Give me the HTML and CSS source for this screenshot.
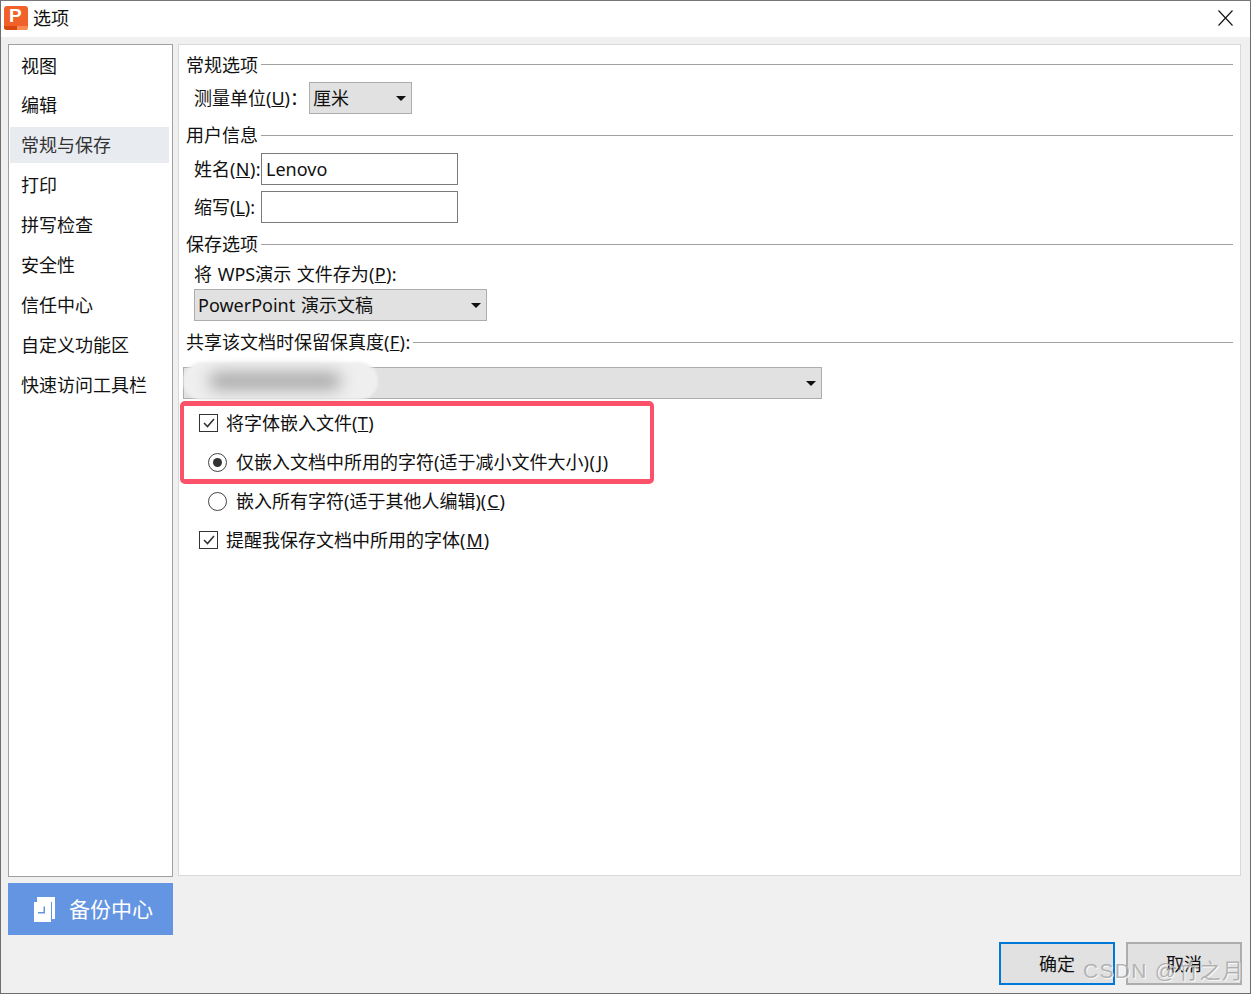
FILE: index.html
```html
<!DOCTYPE html>
<html lang="zh-CN">
<head>
<meta charset="utf-8">
<title>选项</title>
<link rel="stylesheet" href="styles.css">
</head>
<body>
<div class="window">
  <header class="titlebar">
    <svg class="logo" width="24" height="24" viewBox="0 0 24 24">
      <rect width="24" height="24" rx="3" fill="#f0622a"/>
      <path d="M0 20h13v4H3a3 3 0 0 1-3-3z" fill="#d9480f"/>
      <path d="M13 20h11v1a3 3 0 0 1-3 3h-8z" fill="#f98a50"/>
      <text x="5" y="16" class="logo-p">P</text>
    </svg>
    <span class="title">选项</span>
    <svg class="close" width="15" height="16" viewBox="0 0 15 16"><path d="M.5.5l14 15M14.500.5l-14 15" stroke="#111" stroke-width="1.100" fill="none"/></svg>
  </header>
  <div class="content">
    <div class="side-col">
      <nav class="sidebar">
        <div class="nav-item">视图</div>
        <div class="nav-item">编辑</div>
        <div class="nav-item active">常规与保存</div>
        <div class="nav-item">打印</div>
        <div class="nav-item">拼写检查</div>
        <div class="nav-item">安全性</div>
        <div class="nav-item">信任中心</div>
        <div class="nav-item">自定义功能区</div>
        <div class="nav-item">快速访问工具栏</div>
      </nav>
      <div class="backup">
        <svg width="22" height="25" viewBox="0 0 22 25">
          <path d="M3 0h18v22h-3V5H3z" fill="#fff"/>
          <rect x="0" y="5" width="17" height="20" fill="#fff"/>
          <path d="M4 15h5.500V9.500H11V16.500H4z" fill="#6495e2"/>
        </svg>
        <span>备份中心</span>
      </div>
    </div>
    <main class="panel">
      <div class="group group-first"><span>常规选项</span><i></i></div>
      <div class="row row-unit"><span class="lbl unit-lbl">测量单位(<u>U</u>)：</span>
        <div class="select sel-unit"><span>厘米</span><b></b></div></div>
      <div class="group gap10"><span>用户信息</span><i></i></div>
      <div class="row row-name"><span class="lbl name-lbl">姓名<span class="key-s">(<u>N</u>)</span>:</span><div class="input">Lenovo</div></div>
      <div class="row row-abbr"><span class="lbl name-lbl">缩写(<u>L</u>):</span><div class="input"></div></div>
      <div class="group gap10"><span>保存选项</span><i></i></div>
      <div class="row row-save"><span class="lbl wide-words">将 WPS演示 文件存为<span class="key-s">(<u>P</u>)</span>:</span></div>
      <div class="row row-format"><div class="select sel-format"><span class="wide-words">PowerPoint 演示文稿</span><b></b></div></div>
      <div class="group gap10"><span>共享该文档时保留保真度<span class="key-s">(<u>F</u>)</span>:</span><i></i></div>
      <div class="row row-share"><div class="select sel-share"><span></span><b></b></div><div class="blur"></div></div>
      <label class="opt opt-first"><span class="check"><svg width="12" height="10" viewBox="0 0 12 10"><path d="M1 5l3.500 3.500L11 1" stroke="#333" stroke-width="1.600" fill="none"/></svg></span>将字体嵌入文件<span class="key-s">(<u>T</u>)</span></label>
      <label class="opt opt-radio"><span class="radio on"></span>仅嵌入文档中所用的字符(适于减小文件大小<span class="key-m">)(<u>J</u>)</span></label>
      <label class="opt opt-radio"><span class="radio"></span>嵌入所有字符(适于其他人编辑)<span class="key-l">(<u>C</u>)</span></label>
      <label class="opt"><span class="check"><svg width="12" height="10" viewBox="0 0 12 10"><path d="M1 5l3.500 3.500L11 1" stroke="#333" stroke-width="1.600" fill="none"/></svg></span>提醒我保存文档中所用的字体<span class="key-l">(<u>M</u>)</span></label>
      <div class="highlight"></div>
    </main>
  </div>
  <footer class="footer">
    <button class="btn primary">确定</button>
    <button class="btn">取消</button>
  </footer>
  <div class="watermark">CSDN @竹之月</div>
</div>
</body>
</html>
```
FILE: styles.css
```css
* { box-sizing: border-box; }
html, body { margin: 0; padding: 0; }
body {
  width: 1251px; height: 994px; overflow: hidden;
  font-family: "Noto Sans", "Noto Sans CJK SC", sans-serif;
  font-size: 18px; line-height: 22px; color: #111;
}
.window {
  position: relative; width: 1251px; height: 994px;
  background: #f0f0f0; border: 1px solid #6e6e6e; border-top-color: #777;
  display: flex; flex-direction: column;
}
.titlebar {
  height: 36px; background: #fff; display: flex; align-items: center;
  padding: 0 17px 2px 3px; flex: none;
}
.logo { flex: none; }
.logo-p { font: bold 19px "Liberation Sans", sans-serif; fill: #fff; }
.title { margin-left: 5px; }
.close { margin-left: auto; }
.content { display: flex; flex: none; height: 898px; padding: 7px 9px 0 7px; gap: 5px; }
.side-col { width: 165px; flex: none; display: flex; flex-direction: column; gap: 6px; }
.sidebar {
  height: 833px; background: #fff; border: 1px solid #a0a0a0;
  padding: 2px 3px 0 1px; display: flex; flex-direction: column; gap: 4px;
}
.nav-item { height: 36px; line-height: 37px; padding-left: 11px; white-space: nowrap; }
.nav-item:first-child { line-height: 39px; }
.nav-item.active { background: #e8ebf0; color: #333; }
.backup {
  height: 52px; background: #6495e2; color: #fff; display: flex; align-items: center;
  padding-left: 26px; gap: 13px; font-size: 21px;
}
.panel {
  position: relative; flex: 1; height: 832px; background: #fff; border: 1px solid #d9d9d9;
  padding: 9px 7px 0 7px; display: flex; flex-direction: column;
}
.group { display: flex; align-items: center; height: 22px; gap: 3px; flex: none; white-space: nowrap; }
.group i { flex: 1; height: 1px; background: #a0a0a0; }
.group-first i { margin-top: -1px; }
.gap10 { margin-top: 10px; }
.row { display: flex; align-items: center; flex: none; padding-left: 8px; white-space: nowrap; }
.row-unit { margin-top: 6px; height: 32px; }
.row-name { margin-top: 7px; height: 32px; }
.row-abbr { margin-top: 6px; height: 32px; }
.row-save { margin-top: 8px; height: 22px; }
.row-format { margin-top: 4px; height: 32px; }
.row-share { margin-top: 14px; height: 32px; padding-left: 0; position: relative; }
.unit-lbl { width: 115px; }
.name-lbl { width: 67px; }
.key-s { letter-spacing: .4px; }
.key-m { letter-spacing: .7px; }
.key-l { letter-spacing: 1px; }
.wide-words { word-spacing: 1px; }
.select {
  height: 32px; background: #e1e1e1; border: 1px solid #adadad; display: flex; align-items: center;
  padding: 0 5px 0 3px; justify-content: space-between;
}
.select b { width: 0; height: 0; border: 5px solid transparent; border-top: 5px solid #111; border-bottom: 0; }
.sel-unit { width: 103px; }
.sel-format { width: 293px; }
.sel-share { width: 639px; margin-left: -3px; }
.input { width: 197px; height: 32px; border: 1px solid #7a7a7a; background: #fff; padding-left: 4px; line-height: 30px; }
.blur {
  position: absolute; left: -3px; top: -5px; width: 195px; height: 38px; border-radius: 19px;
  background: #efefef; filter: blur(1.500px);
}
.blur::after {
  content: ""; position: absolute; left: 26px; top: 11px; width: 132px; height: 16px; border-radius: 8px;
  background: #a2a2a2; filter: blur(8px);
}
.opt { display: flex; align-items: center; height: 24px; flex: none; margin-top: 15px; padding-left: 13px; white-space: nowrap; }
.opt-first { margin-top: 12px; }
.opt-radio { padding-left: 22px; }
.check {
  width: 19px; height: 18px; border: 1px solid #333; background: #fff; margin: 0 8px 1px 0;
  display: flex; align-items: center; justify-content: center; flex: none;
}
.radio {
  width: 19px; height: 19px; border: 1px solid #444; border-radius: 50%; margin-right: 9px; flex: none;
  display: flex; align-items: center; justify-content: center;
}
.radio.on::after { content: ""; width: 9px; height: 9px; border-radius: 50%; background: #333; }
.highlight {
  position: absolute; left: 1px; top: 356px; width: 474px; height: 83px;
  border-style: solid; border-color: #fb5269; border-width: 5px 4px; border-radius: 5px; pointer-events: none;
}
.footer { flex: 1; display: flex; justify-content: flex-end; gap: 11px; padding: 7px 8px 0 0; }
.btn {
  width: 116px; height: 43px; background: #e1e1e1; border: 2px solid #adadad; font: inherit; color: #111;
  padding: 0; margin: 0;
}
.btn.primary { border-color: #0078d7; }
.watermark {
  position: absolute; left: 1082px; top: 956px; font-size: 21px; line-height: 28px; color: rgba(140,140,140,.6);
  text-shadow: 1px 1px 0 rgba(255,255,255,.8); white-space: nowrap; letter-spacing: 1.300px;
  font-family: "Liberation Sans", "Noto Sans CJK SC", sans-serif;
}
```
